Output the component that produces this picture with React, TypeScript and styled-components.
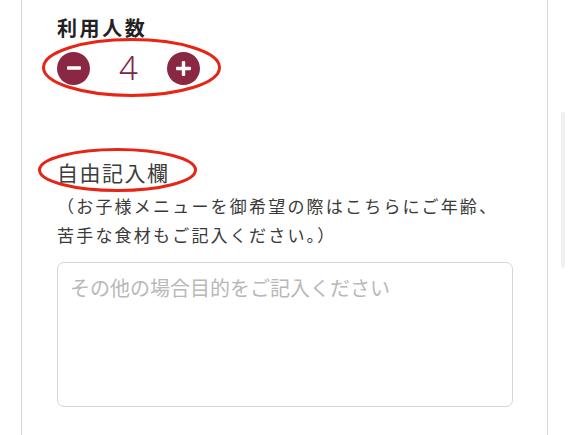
import styled, { createGlobalStyle } from "styled-components";

const GlobalStyle = createGlobalStyle`
  body {
    margin: 0;
    background: #ffffff;
    font-family: "Noto Sans CJK JP", "Noto Sans", sans-serif;
  }
`;

const Page = styled.div`
  display: flex;
  align-items: flex-start;
  height: 435px;
  overflow: hidden;
`;

const Card = styled.div`
  margin-left: 21px;
  width: 456px;
  height: 435px;
  padding: 16px 34px 0 35px;
  border-left: 1px solid #d6d6d6;
  border-right: 1px solid #d6d6d6;
  display: flex;
  flex-direction: column;
`;

const ScrollThumb = styled.div`
  margin: 112px 0 0 13px;
  width: 4px;
  height: 156px;
  border-radius: 2px;
  background: #f0f0f0;
`;

const Title = styled.div`
  font-size: 20px;
  font-weight: 700;
  line-height: 24px;
  letter-spacing: 2.6px;
  color: #222222;
`;

const CounterRow = styled.div`
  position: relative;
  margin-top: 11px;
  display: flex;
  align-items: center;
  height: 34px;
`;

const RoundButton = styled.button`
  width: 33px;
  height: 33px;
  padding: 0;
  border: none;
  border-radius: 50%;
  background: #8a2844;
  display: flex;
  align-items: center;
  justify-content: center;
  cursor: pointer;
`;

const Count = styled.div`
  width: 77px;
  text-align: center;
  font-family: "Noto Sans", "Liberation Sans", sans-serif;
  font-weight: 300;
  font-size: 33px;
  line-height: 34px;
  color: #7e2646;
`;

const Ring = styled.svg<{ $x: number; $y: number; $w: number; $h: number }>`
  position: absolute;
  left: ${(p) => p.$x}px;
  top: ${(p) => p.$y}px;
  width: ${(p) => p.$w}px;
  height: ${(p) => p.$h}px;
  overflow: visible;
  pointer-events: none;
`;

const FreeHeading = styled.div`
  position: relative;
  margin-top: 72px;
  font-size: 21px;
  line-height: 30px;
  letter-spacing: 1.5px;
  color: #3d3d3d;
  align-self: flex-start;
`;

const Note = styled.p`
  margin: 4px 0 0 0;
  font-size: 17px;
  line-height: 29px;
  letter-spacing: 2.2px;
  color: #3a3a3a;
  white-space: nowrap;
`;

const Memo = styled.textarea`
  margin-top: 13px;
  width: 456px;
  height: 145px;
  box-sizing: border-box;
  padding: 10px 12px;
  border: 1.5px solid #d6d6d6;
  border-radius: 7px;
  resize: none;
  font-family: "Noto Sans CJK JP", "Noto Sans", sans-serif;
  font-size: 20px;
  line-height: 30px;
  color: #333333;
  outline: none;

  &::placeholder {
    color: #b8b8b8;
  }
`;

const Ellipse = ({ x, y, w, h }: { x: number; y: number; w: number; h: number }) => (
  <Ring $x={x} $y={y} $w={w} $h={h} viewBox={`0 0 ${w} ${h}`}>
    <ellipse cx={w / 2} cy={h / 2} rx={w / 2 - 1.5} ry={h / 2 - 1.5} fill="none" stroke="#e62516" strokeWidth={3} />
  </Ring>
);

const App: React.FC = () => {
  return (
    <>
      <GlobalStyle />
      <Page>
        <Card>
          <Title>利用人数</Title>
          <CounterRow>
            <RoundButton aria-label="減らす">
              <svg width="14" height="14" viewBox="0 0 14 14">
                <rect x="0" y="5.3" width="14" height="3.4" rx="1" fill="#ffffff" />
              </svg>
            </RoundButton>
            <Count>4</Count>
            <RoundButton aria-label="増やす">
              <svg width="15" height="15" viewBox="0 0 15 15">
                <rect x="0" y="5.8" width="15" height="3.4" rx="1" fill="#ffffff" />
                <rect x="5.8" y="0" width="3.4" height="15" rx="1" fill="#ffffff" />
              </svg>
            </RoundButton>
            <Ellipse x={-15} y={-13} w={179} h={59} />
          </CounterRow>
          <FreeHeading>
            自由記入欄
            <Ellipse x={-19} y={-9} w={159} h={44} />
          </FreeHeading>
          <Note>
            （お子様メニューを御希望の際はこちらにご年齢、
            <br />
            苦手な食材もご記入ください。）
          </Note>
          <Memo placeholder="その他の場合目的をご記入ください" />
        </Card>
        <ScrollThumb />
      </Page>
    </>
  );
};

export default App;
